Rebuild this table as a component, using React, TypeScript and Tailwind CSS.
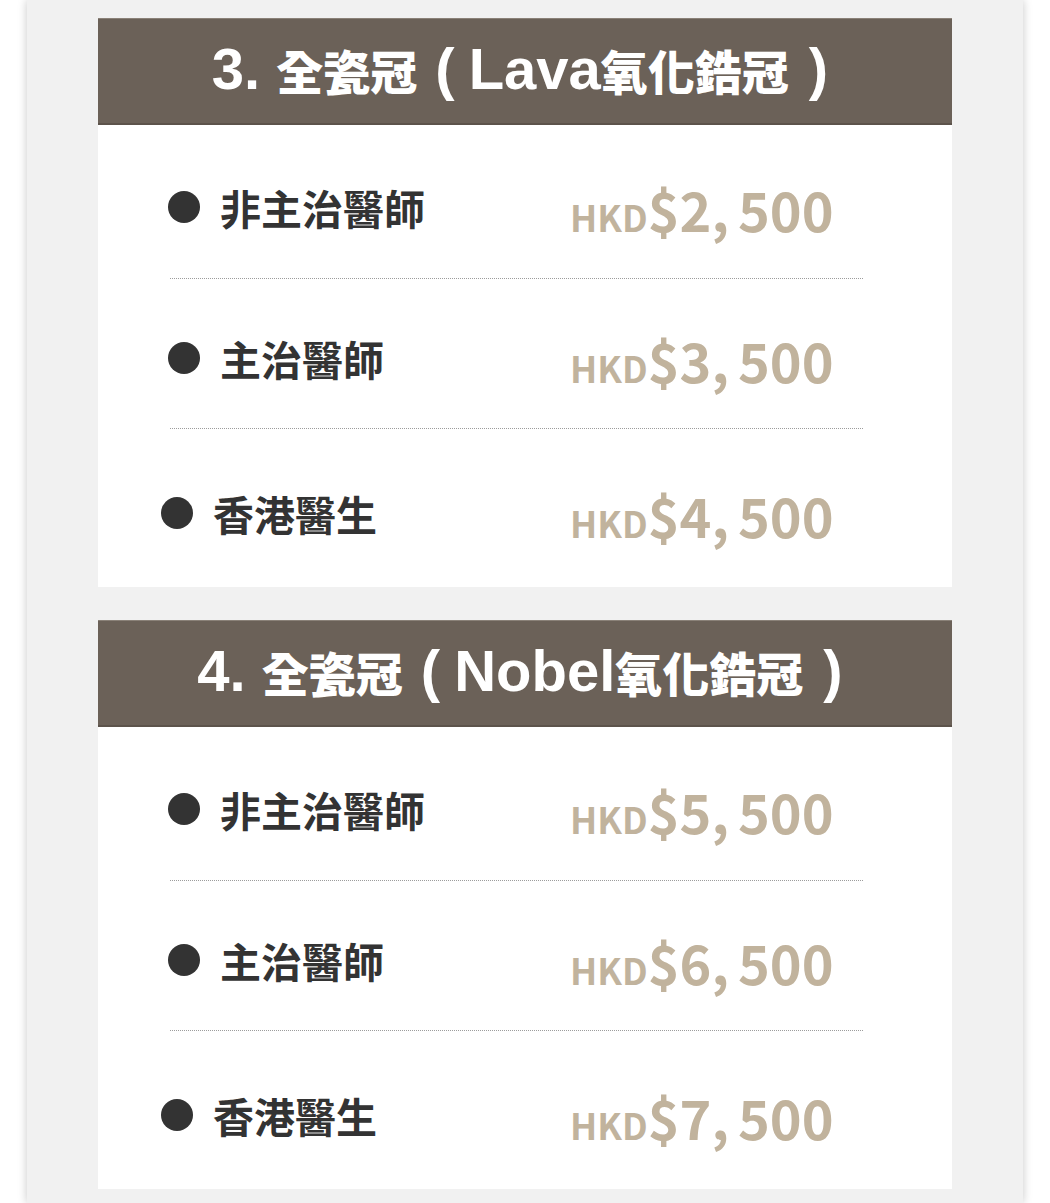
type Row = {
  label: string;
  price: string;
  shift?: boolean;
};

type Section = {
  no: string;
  brand: string;
  rows: Row[];
};

const sections: Section[] = [
  {
    no: '3.',
    brand: 'Lava',
    rows: [
      { label: '非主治醫師', price: '2,500' },
      { label: '主治醫師', price: '3,500' },
      { label: '香港醫生', price: '4,500', shift: true },
    ],
  },
  {
    no: '4.',
    brand: 'Nobel',
    rows: [
      { label: '非主治醫師', price: '5,500' },
      { label: '主治醫師', price: '6,500' },
      { label: '香港醫生', price: '7,500', shift: true },
    ],
  },
];

const cjk = "font-['Noto_Sans_CJK_TC','Noto_Sans_CJK_SC',sans-serif]";
const latin = "font-['Liberation_Sans','Noto_Sans_CJK_TC',sans-serif]";

// padding per row so the centres land where the reference has them
const rowPad = ['pt-[52px] pb-[41px]', 'pt-[49px] pb-[40px]', 'pt-[54px] pb-[44px]'];

function PriceRow({ row, index, last }: { row: Row; index: number; last: boolean }) {
  const [head, tail] = row.price.split(',');
  return (
    <>
      <div className={rowPad[index]}>
        <div className={`flex h-[60px] items-center ${row.shift ? 'pl-[63px]' : 'pl-[70px]'}`}>
          <div className={`flex items-center ${row.shift ? 'w-[409px]' : 'w-[402px]'}`}>
            <span className="h-[32px] w-[32px] shrink-0 rounded-full bg-[#333333]" />
            <span className={`ml-[20px] text-[41px] leading-none font-bold text-[#333333] ${cjk}`}>
              {row.label}
            </span>
          </div>
          <div className={`mt-[4px] flex items-baseline leading-none font-bold whitespace-nowrap text-[#c1b39d] ${cjk}`}>
            <span className="text-[36px]">HKD</span>
            <span className="text-[54px]">
              ${head}
              <span className="mr-[9px]">,</span>
              {tail}
            </span>
          </div>
        </div>
      </div>
      {!last ? <div className="mr-[89px] ml-[72px] border-t border-dotted border-[#9c9c9c]" /> : null}
    </>
  );
}

function PriceCard({ section }: { section: Section }) {
  return (
    <div className="bg-white">
      <div className="flex h-[107px] items-center justify-center border-t border-[#8a8178] border-b-2 border-b-[#5c534b] bg-[#6b6158]">
        <h2 className={`-mt-[4px] flex items-center pr-[10px] font-bold whitespace-nowrap text-white ${latin}`}>
          <span className="text-[58px] leading-none">{section.no}&nbsp;</span>
          <span className={`text-[47px] leading-none font-black ${cjk}`}>全瓷冠</span>
          <span className="pr-[14px] pl-[18px] text-[58px] leading-none">(</span>
          <span className="text-[58px] leading-none">{section.brand}</span>
          <span className={`text-[47px] leading-none font-black ${cjk}`}>氧化鋯冠</span>
          <span className="pl-[20px] text-[58px] leading-none">)</span>
        </h2>
      </div>
      <div>
        {section.rows.map((row, i) => (
          <PriceRow key={row.label} row={row} index={i} last={i === section.rows.length - 1} />
        ))}
      </div>
    </div>
  );
}

export default function App() {
  return (
    <div className="min-h-[1203px] bg-white">
      <div className="mx-[27px] flex min-h-[1203px] flex-col gap-[33px] bg-[#f1f1f1] px-[71px] pt-[18px] shadow-[0_0_9px_rgba(0,0,0,0.22)]">
        {sections.map((s) => (
          <PriceCard key={s.brand} section={s} />
        ))}
      </div>
    </div>
  );
}
